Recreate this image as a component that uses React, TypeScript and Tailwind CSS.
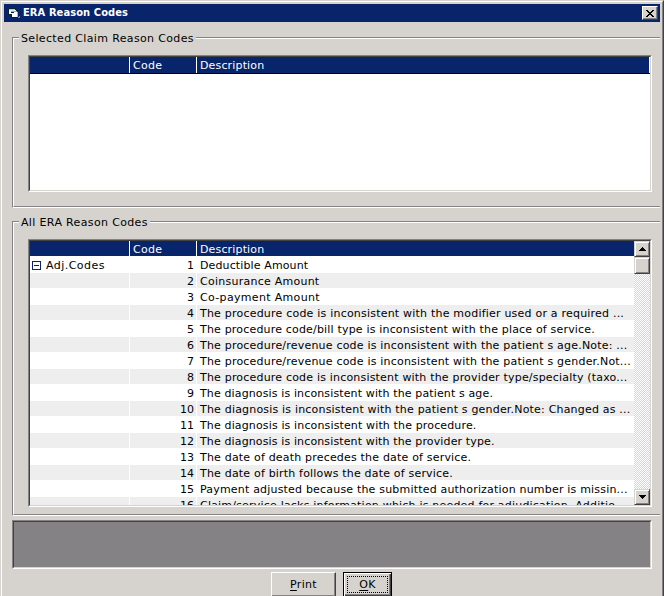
import type { ReactNode } from 'react';

type Row = { text: string; track: string };

const rows: Row[] = [
  { text: 'Deductible Amount', track: 'tracking-[0.12px]' },
  { text: 'Coinsurance Amount', track: 'tracking-[0.25px]' },
  { text: 'Co-payment Amount', track: 'tracking-[0.33px]' },
  { text: 'The procedure code is inconsistent with the modifier used or a required ...', track: 'tracking-[0.21px]' },
  { text: 'The procedure code/bill type is inconsistent with the place of service.', track: 'tracking-[0.18px]' },
  { text: 'The procedure/revenue code is inconsistent with the patient s age.Note: ...', track: 'tracking-[0.2px]' },
  { text: 'The procedure/revenue code is inconsistent with the patient s gender.Not...', track: 'tracking-[0.2px]' },
  { text: 'The procedure code is inconsistent with the provider type/specialty (taxo...', track: 'tracking-[0.19px]' },
  { text: 'The diagnosis is inconsistent with the patient s age.', track: 'tracking-[0.13px]' },
  { text: 'The diagnosis is inconsistent with the patient s gender.Note: Changed as ...', track: 'tracking-[0.19px]' },
  { text: 'The diagnosis is inconsistent with the procedure.', track: 'tracking-[0.14px]' },
  { text: 'The diagnosis is inconsistent with the provider type.', track: 'tracking-[0.13px]' },
  { text: 'The date of death precedes the date of service.', track: 'tracking-[0.19px]' },
  { text: 'The date of birth follows the date of service.', track: 'tracking-[0.19px]' },
  { text: 'Payment adjusted because the submitted authorization number is missin...', track: 'tracking-[0.19px]' },
  { text: 'Claim/service lacks information which is needed for adjudication. Additio...', track: 'tracking-[0.2px]' },
];

function Group({ title, className, children }: { title: string; className: string; children: ReactNode }) {
  return (
    <section className={`flex flex-col ${className}`}>
      <div className="flex h-[14px] shrink-0 items-start">
        <div className="mt-[6px] h-2 w-[7px] shrink-0 border-l border-t border-[#848284] shadow-[inset_1px_1px_#fff]" />
        <h2 className="shrink-0 px-[2px] text-[11px] leading-[16px] tracking-[0.35px] whitespace-nowrap">{title}</h2>
        <div className="mt-[6px] h-[2px] grow border-t border-[#848284] bg-white" />
      </div>
      <div className="flex grow flex-col border-b border-l border-b-white border-l-[#848284]">
        <div className="grow border-b border-l border-b-[#848284] border-l-white pt-[10px] pl-[14px]">{children}</div>
      </div>
    </section>
  );
}

function Sunken({ className, children }: { className: string; children?: ReactNode }) {
  return (
    <div className={`border border-t-[#848284] border-r-white border-b-white border-l-[#848284] ${className}`}>
      <div className="flex h-full w-full overflow-hidden border border-t-[#424142] border-r-[#d6d3ce] border-b-[#d6d3ce] border-l-[#424142]">
        {children}
      </div>
    </div>
  );
}

function Header({ className }: { className: string }) {
  return (
    <div className={`flex shrink-0 bg-[#08246b] text-[11px] leading-[18px] text-white ${className}`}>
      <div className="w-[99px] shrink-0" />
      <div className="w-[67px] shrink-0 border-l border-white pl-[3px] tracking-[0.3px]">Code</div>
      <div className="grow border-l border-white pl-[3px] tracking-[0.15px]">Description</div>
    </div>
  );
}

const raised =
  'border border-t-[#d6d3ce] border-l-[#d6d3ce] border-r-[#424142] border-b-[#424142] bg-[#d6d3ce] shadow-[inset_1px_1px_#fff,inset_-1px_-1px_#848284]';

function ScrollBar() {
  return (
    <div className="flex w-4 shrink-0 flex-col bg-[#ebe9e5] bg-[repeating-conic-gradient(#ffffff_0_25%,#d8d5ce_0_50%)] bg-[length:2px_2px]">
      <div className={`flex h-4 shrink-0 items-center justify-center ${raised}`}>
        <svg width="7" height="4" viewBox="0 0 7 4" shapeRendering="crispEdges">
          <path d="M3 0h1v1h1v1h1v1h1v1H0V3h1V2h1V1h1z" />
        </svg>
      </div>
      <div className={`h-[17px] shrink-0 ${raised}`} />
      <div className="grow" />
      <div className={`flex h-4 shrink-0 items-center justify-center ${raised}`}>
        <svg width="7" height="4" viewBox="0 0 7 4" shapeRendering="crispEdges">
          <path d="M0 0h7v1H6v1H5v1H4v1H3V3H2V2H1V1H0z" />
        </svg>
      </div>
    </div>
  );
}

function CodeRow({ row, n }: { row: Row; n: number }) {
  const bg = n % 2 === 0 ? 'bg-[#eeeeee]' : 'bg-white';
  return (
    <div className="flex h-4 shrink-0 pb-px text-[11px] leading-[18px] whitespace-nowrap">
      <div className={`flex w-[99px] shrink-0 ${bg}`}>
        {n === 1 && (
          <>
            <svg className="mt-1 ml-[2px]" width="9" height="9" viewBox="0 0 9 9" shapeRendering="crispEdges">
              <path d="M0 0h9v9H0z" fill="#08246b" />
              <path d="M1 1h7v7H1z" fill="#fff" />
              <path d="M2 4h5v1H2z" fill="#08246b" />
            </svg>
            <span className="ml-[5px] tracking-[0.45px]">Adj.Codes</span>
          </>
        )}
      </div>
      <div className={`ml-px w-[66px] shrink-0 pr-[2px] text-right ${bg}`}>{n}</div>
      <div className={`ml-px grow pl-[3px] ${row.track} ${bg}`}>{row.text}</div>
    </div>
  );
}

export default function App() {
  return (
    <div className="h-[596px] w-[664px] overflow-hidden bg-[#d6d3ce] font-['DejaVu_Sans',Verdana,sans-serif] text-black">
      <div className="flex h-[600px] flex-col border-t border-r border-l border-t-[#d6d3ce] border-r-[#424142] border-l-[#d6d3ce]">
        <div className="flex grow flex-col border-t border-r border-l border-t-white border-r-[#848284] border-l-white px-[2px] pt-[2px]">
          <header className="flex h-[18px] shrink-0 items-center bg-[#08246b] pr-[2px] pl-[4px]">
            <svg className="mt-px" width="13" height="11" viewBox="0 0 13 11" shapeRendering="crispEdges">
              <path d="M1 0h7v2h2v8H3V7H0V1h1z" fill="#10202c" />
              <path d="M1 1h6v1H1z" fill="#7be0e6" />
              <path d="M1 2h7v1H1z" fill="#d8f6f7" />
              <path d="M1 3h2v3H1z" fill="#fff" />
              <path d="M3 3h6v1H3z" fill="#63c9d2" />
              <path d="M3 4h6v5H4V6H3z" fill="#fff" />
              <path d="M3 4h3v1H3z" fill="#10202c" />
              <path d="M9 4h1v5H9z" fill="#a9b4bd" />
              <path d="M11 8h1v1h-1zM10 9h2v1h-2z" fill="#848294" />
            </svg>
            <h1 className="ml-[2px] grow font-['DejaVu_Sans_Condensed','DejaVu_Sans',sans-serif] text-[11px] leading-[18px] font-bold tracking-[0.1px] whitespace-nowrap text-white">
              ERA Reason Codes
            </h1>
            <button aria-label="Close" className="flex h-[14px] w-4 items-center justify-center border border-t-white border-r-[#424142] border-b-[#424142] border-l-white bg-[#d6d3ce] shadow-[inset_-1px_-1px_#848284]">
              <svg width="8" height="7" viewBox="0 0 8 7" shapeRendering="crispEdges">
                <path d="M0 0h2v1h1v1h2V1h1V0h2v1H7v1H6v1H5v1h1v1h1v1h1v1H6V6H5V5H3v1H2v1H0V6h1V5h1V4h1V3H2V2H1V1H0z" />
              </svg>
            </button>
          </header>
          <main className="flex flex-col pl-2">
            <Group title="Selected Claim Reason Codes" className="mt-[9px] h-[177px]">
              <Sunken className="h-[137px] w-[624px]">
                <div className="flex grow flex-col bg-white">
                  <Header className="mr-px h-4" />
                  <div className="h-px bg-black" />
                </div>
              </Sunken>
            </Group>
            <Group title="All ERA Reason Codes" className="mt-[7px] h-[301px]">
              <Sunken className="h-[268px] w-[624px]">
                <div className="flex min-w-0 grow flex-col overflow-hidden bg-white">
                  <Header className="mb-px h-[15px]" />
                  {rows.map((row, i) => (
                    <CodeRow key={row.text} row={row} n={i + 1} />
                  ))}
                </div>
                <ScrollBar />
              </Sunken>
            </Group>
            <Sunken className="mt-1 h-[49px] w-[640px] bg-[#848284]" />
            <div className="mt-[3px] ml-[259px] flex gap-[7px] text-[11px] leading-[14px] tracking-[0.3px]">
              <button className="h-[25px] w-[65px] border border-t-white border-r-[#424142] border-b-[#424142] border-l-white shadow-[inset_-1px_-1px_#848284]">
                <span className="underline underline-offset-2">P</span>rint
              </button>
              <button className="h-[25px] w-[49px] border border-black p-[3px] shadow-[inset_1px_1px_#fff,inset_-1px_-1px_#424142,inset_-2px_-2px_#848284]">
                <span className="flex h-full items-center justify-center border border-dotted border-black">
                  <span className="underline underline-offset-2">O</span>K
                </span>
              </button>
            </div>
          </main>
        </div>
      </div>
    </div>
  );
}
